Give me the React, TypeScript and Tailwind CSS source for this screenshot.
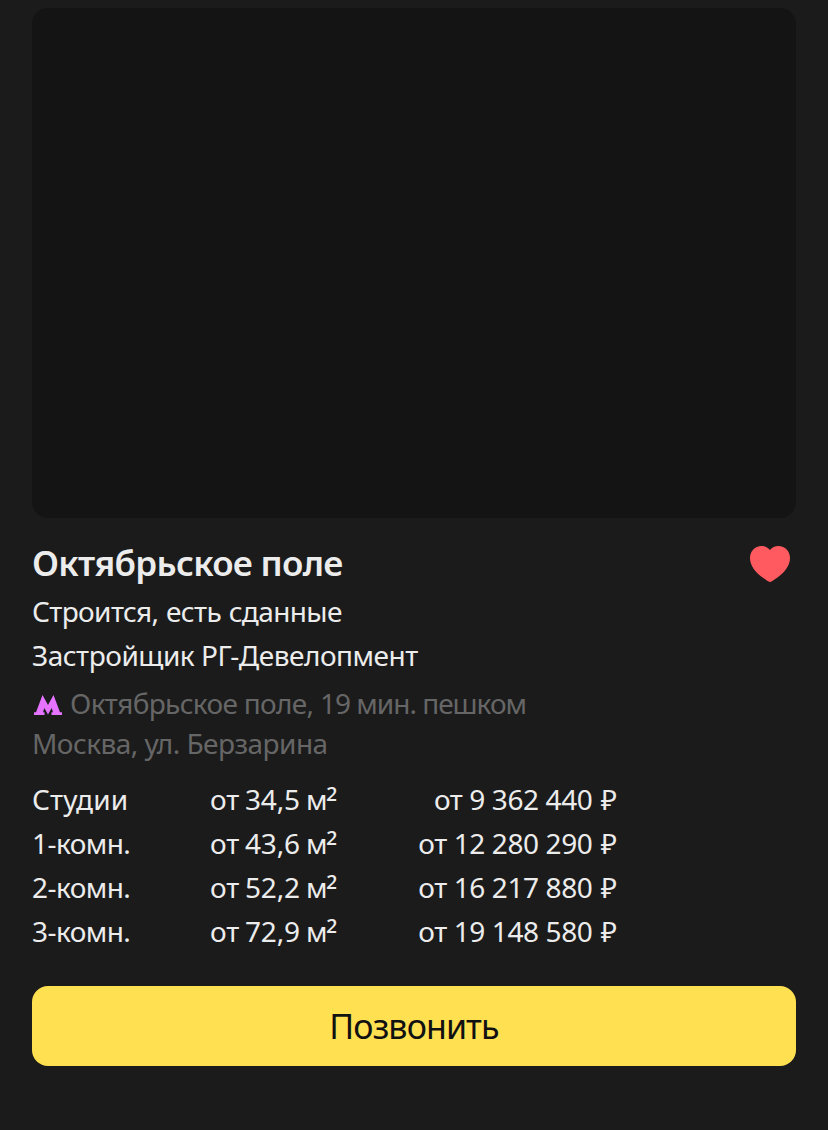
import React from "react";

const rows = [
  { rooms: "Студии", area: "от 34,5 м", price: "от 9 362 440", tight: false },
  { rooms: "1-комн.", area: "от 43,6 м", price: "от 12 280 290", tight: true },
  { rooms: "2-комн.", area: "от 52,2 м", price: "от 16 217 880", tight: true },
  { rooms: "3-комн.", area: "от 72,9 м", price: "от 19 148 580", tight: true },
];

export default function App() {
  return (
    <main className="h-[1130px] w-[828px] overflow-hidden bg-[#1b1b1b] px-8 pt-2 font-['Noto_Sans',sans-serif] text-[28px] text-[#ececec]">
      <div className="h-[510px] rounded-2xl bg-[#141414]" />
      <div className="mt-6 flex h-11 items-center justify-between pr-1.5">
        <h1 className="pb-0.5 text-[35px] leading-[42px] font-semibold tracking-[-0.7px] whitespace-nowrap">Октябрьское поле</h1>
        <svg className="h-9 w-10" viewBox="0 0 40 36" fill="#ff5a5f" aria-hidden="true">
          <path d="M20 36C18.800 36 17.500 34.700 15.500 33.500C6 27.500 0 20 0 12C0 5 5 0 11.500 0C15 0 18 1.500 20 4C22 1.500 25 0 28.500 0C35 0 40 5 40 12C40 20 34 27.500 24.500 33.500C22.500 34.700 21.200 36 20 36Z" />
        </svg>
      </div>
      <p className="mt-[3px] h-11 leading-[44px] tracking-[-0.62px] [word-spacing:1px] whitespace-nowrap">Строится, есть сданные</p>
      <p className="h-11 leading-[44px] tracking-[-0.47px] whitespace-nowrap">Застройщик РГ-Девелопмент</p>
      <div className="mt-1.5 flex h-10 items-center text-[#666]">
        <svg className="mt-[3px] mr-2 ml-0.5 h-5 w-7" viewBox="0 0 28 20" fill="#e573ff" aria-hidden="true">
          <path d="M8.500 0L14 10L19.500 0L26 17.200H28V20H17.500V17.200H19L17.700 13L14 19.500L10.300 13L9 17.200H10.500V20H0V17.200H2Z" />
        </svg>
        <span className="tracking-[-1px] whitespace-nowrap">
          <span className="tracking-[-0.67px]">Октябрьское поле, </span>19 мин. пешком
        </span>
      </div>
      <p className="h-10 leading-10 tracking-[-0.54px] text-[#666]">Москва, ул. Берзарина</p>
      <div className="mt-3.5">
        {rows.map((r) => (
          <div key={r.rooms} className="grid h-11 grid-cols-[178px_160px_247px] items-center whitespace-nowrap">
            <span className={r.tight ? "tracking-[-0.55px]" : "tracking-[0.1px]"}>{r.rooms}</span>
            <span className="flex items-center">
              <span className="tracking-[-0.2px] [word-spacing:-1px]">{r.area}</span>
              <span className="-ml-px pt-1.5 text-[32px] leading-[38px]">²</span>
            </span>
            <span className="text-right tracking-[-0.4px]">
              {r.price}
              <span className="ml-px tracking-normal"> ₽</span>
            </span>
          </div>
        ))}
      </div>
      <button className="mt-[33px] flex h-20 w-full items-center justify-center rounded-2xl bg-[#ffe051] text-[34px] tracking-[-0.9px] text-[#111]">Позвонить</button>
    </main>
  );
}
